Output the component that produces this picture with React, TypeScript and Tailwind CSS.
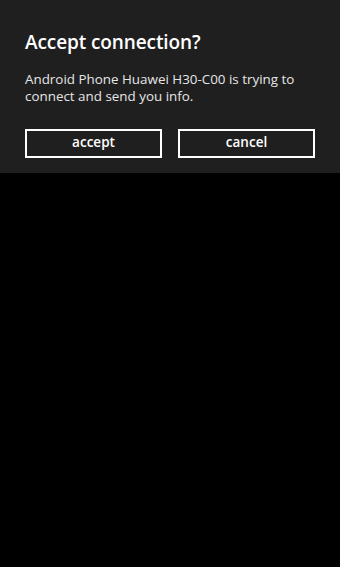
export default function App() {
  return (
    <div className="w-[340px] h-[567px] bg-black" style={{ fontFamily: '"Open Sans", "Noto Sans", sans-serif' }}>
      <div className="h-[173px] bg-[#1f1f1f] px-[25px] pt-[27px] text-white">
        <h1 className="text-[19px] leading-[30px] font-semibold tracking-[-0.1px]">Accept connection?</h1>
        <p className="mt-[14px] text-[13.4px] leading-[17px] text-[#e6e6e6]">
          Android Phone Huawei H30-C00 is trying to connect and send you info.
        </p>
        <div className="mt-[24px] flex gap-[16px]">
          <button className="w-[137px] h-[29px] border-2 border-white text-[13.5px] font-semibold leading-none pb-[1px]">accept</button>
          <button className="w-[137px] h-[29px] border-2 border-white text-[13.5px] font-semibold leading-none pb-[1px]">cancel</button>
        </div>
      </div>
    </div>
  );
}
